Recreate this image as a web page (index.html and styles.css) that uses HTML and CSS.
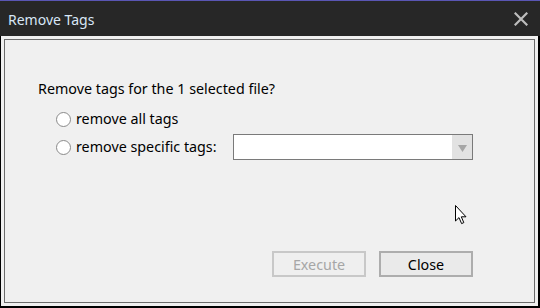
FILE: index.html
```html
<!DOCTYPE html>
<html>
<head>
<meta charset="utf-8">
<link rel="stylesheet" href="styles.css">
</head>
<body>
<div class="window">
  <div class="titlebar">
    <span class="title">Remove Tags</span>
    <svg class="close" width="14" height="14" viewBox="0 0 14 14"><path d="M1.5 1.5 L12.5 12.5 M12.5 1.5 L1.5 12.5" stroke="#bdbdbd" stroke-width="2.2" stroke-linecap="square"/></svg>
  </div>
  <div class="client">
    <div class="inner">
      <div class="question">Remove tags for the 1 selected file?</div>
      <div class="options">
        <label class="opt"><span class="radio"></span><span class="lbl">remove all tags</span></label>
        <div class="opt">
          <span class="radio"></span><span class="lbl">remove specific tags:</span>
          <div class="combo">
            <div class="combo-field"></div>
            <div class="combo-btn"><svg width="9" height="7" viewBox="0 0 9 7"><path d="M0 0 H9 L4.5 7 Z" fill="#a6a6a6"/></svg></div>
          </div>
        </div>
      </div>
      <div class="spacer"></div>
      <div class="buttons">
        <div class="btn disabled">Execute</div>
        <div class="btn">Close</div>
      </div>
    </div>
  </div>
  <svg class="cursor" width="13" height="20" viewBox="0 0 13 20"><path d="M0.5 0.5 V16 L4 12.6 L6.6 18.6 L8.8 17.6 L6.3 11.8 L11 11.8 Z" fill="#fff" stroke="#000" stroke-width="1" stroke-linejoin="miter"/></svg>
</div>
</body>
</html>
```
FILE: styles.css
```css
* { box-sizing: border-box; }
html, body { margin: 0; padding: 0; background: #000; }
body { font-family: "Noto Sans", "Open Sans", sans-serif; }
.window {
  position: relative;
  width: 540px;
  height: 308px;
  display: flex;
  flex-direction: column;
  background: #000;
  border-top: 1px solid #5a56b4;
}
.titlebar {
  height: 35px;
  background: #272727;
  display: flex;
  align-items: center;
  justify-content: space-between;
  padding: 0 12px 0 8px;
  flex: none;
}
.title {
  color: #d8e6f6;
  font-size: 14px;
  padding-top: 1px;
}
.close { display: block; }
.client {
  flex: 1;
  margin: 0 2px 2px 1px;
  background: #f0f0f0;
  padding: 3px;
  display: flex;
}
.inner {
  flex: 1;
  border: 1px solid #6b6b6b;
  display: flex;
  flex-direction: column;
  padding: 39px 61px 25px 33px;
  color: #000;
  font-size: 14.3px;
}
.question { line-height: 20px; }
.options {
  margin-top: 7px;
  padding-left: 18px;
  display: flex;
  flex-direction: column;
  gap: 2px;
}
.opt {
  display: flex;
  align-items: center;
  height: 26px;
}
.radio {
  width: 15px;
  height: 15px;
  border: 1px solid #8a8a8a;
  border-radius: 50%;
  background: #fff;
  margin-right: 5px;
  flex: none;
}
.lbl { line-height: 20px; }
.combo {
  margin-left: auto;
  width: 240px;
  height: 26px;
  border: 1px solid #7a7a7a;
  display: flex;
  padding: 2px;
  background: #fff;
}
.combo-field { flex: 1; background: #fff; }
.combo-btn {
  width: 20px;
  margin: -2px -2px -2px 0;
  background: #e2e2e2;
  display: flex;
  align-items: center;
  justify-content: center;
}
.combo-btn svg { display: block; margin-top: 2px; }
.spacer { flex: 1; }
.buttons {
  display: flex;
  justify-content: flex-end;
  gap: 13px;
}
.btn {
  width: 94px;
  height: 26px;
  border: 2px solid #adadad;
  background: #eaeaea;
  display: flex;
  align-items: center;
  justify-content: center;
  font-size: 14.3px;
}
.btn.disabled {
  border-color: #c8c8c8;
  color: #a6a6a6;
  background: #efefef;
}
.cursor {
  position: absolute;
  left: 455px;
  top: 204px;
}
```
